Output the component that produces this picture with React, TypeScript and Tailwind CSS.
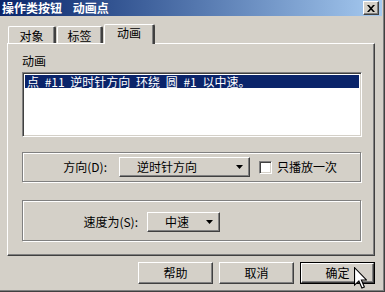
import React from "react";

const raised =
  "border-t border-l border-white border-r border-b border-r-[#404040] border-b-[#404040] shadow-[inset_-1px_-1px_0_#808080]";

function Arrow() {
  return (
    <svg width="7" height="4" viewBox="0 0 7 4" className="block">
      <path d="M0 0H7L3.5 4Z" fill="#000" />
    </svg>
  );
}

function Tab({ label, active, w }: { label: string; active?: boolean; w: string }) {
  return (
    <div
      className={
        (active
          ? "h-[20px] -mb-[1px] relative z-10 pt-[2px] "
          : "h-[17px] pt-[3px] ") +
        w +
        " ml-[1px] bg-[#d4d0c8] border-t border-l border-white border-r-2 border-r-[#404040] shadow-[inset_-1px_0_0_#808080] rounded-tl-[2px] rounded-tr-[2px] flex justify-center text-[12px] leading-[12px]"
      }
    >
      <span>{label}</span>
    </div>
  );
}

function Btn({ label, def }: { label: string; def?: boolean }) {
  if (def) {
    return (
      <div className="w-[75px] h-[22px] border border-black">
        <div className={"w-full h-full flex items-center justify-center text-[12px] leading-[12px] " + raised}>
          {label}
        </div>
      </div>
    );
  }
  return (
    <div className={"w-[75px] h-[22px] flex items-center justify-center text-[12px] leading-[12px] " + raised}>
      {label}
    </div>
  );
}

export default function App() {
  return (
    <div className="w-[385px] h-[292px] bg-[#d4d0c8] flex flex-col overflow-hidden relative text-black font-['Noto_Sans_CJK_SC','Noto_Sans',sans-serif] shadow-[inset_-1px_-1px_0_#404040,inset_-2px_-2px_0_#808080]">
      {/* title bar */}
      <div className="h-[16px] mr-[3px] flex items-center justify-between bg-gradient-to-r from-[#0a246a] to-[#a6caf0] pl-[2px] pr-[3px]">
        <span className="text-white font-bold text-[12px] leading-[12px] [word-spacing:8px]">操作类按钮 动画点</span>
        <div className={"w-[16px] h-[14px] bg-[#d4d0c8] flex items-center justify-center " + raised}>
          <svg width="8" height="7" viewBox="0 0 8 7" className="block">
            <path d="M0 0H2L4 2.2L6 0H8L5 3.5L8 7H6L4 4.8L2 7H0L3 3.5Z" fill="#000" />
          </svg>
        </div>
      </div>

      {/* tabs */}
      <div className="mt-[8px] ml-[7px] h-[19px] flex items-end">
        <Tab label="对象" w="w-[48px]" />
        <Tab label="标签" w="w-[46px]" />
        <Tab label="动画" w="w-[51px]" active />
      </div>

      {/* panel */}
      <div className="ml-[7px] w-[368px] h-[213px] border-t border-l border-white border-r border-b border-r-[#404040] border-b-[#404040] shadow-[inset_-1px_-1px_0_#808080] pl-[14px] pt-[11px] flex flex-col">
        <div className="text-[12px] leading-[12px]">动画</div>
        <div className="mt-[5px] w-[340px] h-[65px] bg-white border-t border-l border-[#808080] border-r border-b border-r-white border-b-white shadow-[inset_1px_1px_0_#404040,inset_-1px_-1px_0_#d4d0c8] p-[2px]">
          <div className="h-[13px] bg-[#0a246a] text-white text-[12px] leading-[13px] pl-[2px] whitespace-nowrap [word-spacing:3px]">
            点 #11 逆时针方向 环绕 圆 #1 以中速。
          </div>
        </div>

        {/* group 1 */}
        <div className="mt-[15px] w-[339px] h-[30px] border border-[#808080] shadow-[inset_1px_1px_0_#fff,1px_1px_0_#fff] flex items-center">
          <div className="w-[84px] text-right text-[12px] leading-[12px]">方向(D):</div>
          <div className={"ml-[12px] w-[131px] h-[20px] flex items-center text-[12px] leading-[12px] pl-[17px] " + raised}>
            <span>逆时针方向</span>
            <span className="ml-auto mr-[6px]">
              <Arrow />
            </span>
          </div>
          <div className="ml-[9px] w-[13px] h-[13px] bg-white border-t border-l border-[#808080] border-r border-b border-r-white border-b-white shadow-[inset_1px_1px_0_#404040,inset_-1px_-1px_0_#d4d0c8]" />
          <div className="ml-[5px] text-[12px] leading-[12px]">只播放一次</div>
        </div>

        {/* group 2 */}
        <div className="mt-[18px] w-[339px] h-[41px] border border-[#808080] shadow-[inset_1px_1px_0_#fff,1px_1px_0_#fff] flex items-start pt-[11px]">
          <div className="w-[115px] h-[20px] flex items-center justify-end text-[12px] leading-[12px]">速度为(S):</div>
          <div className={"ml-[9px] w-[73px] h-[20px] flex items-center text-[12px] leading-[12px] pl-[17px] " + raised}>
            <span>中速</span>
            <span className="ml-auto mr-[6px]">
              <Arrow />
            </span>
          </div>
        </div>
      </div>

      {/* buttons */}
      <div className="mt-[6px] pl-[138px] flex gap-[6px]">
        <Btn label="帮助" />
        <Btn label="取消" />
        <Btn label="确定" def />
      </div>

      {/* cursor */}
      <svg
        className="absolute left-[354px] top-[267px]"
        width="13"
        height="22"
        viewBox="0 0 12 20"
      >
        <path
          d="M0.5 0.5V16.5L4.5 12.8L7.3 19.3L9.6 18.3L6.8 11.8H11.5Z"
          fill="#fff"
          stroke="#000"
          strokeWidth="1"
          strokeLinejoin="miter"
        />
      </svg>
    </div>
  );
}
